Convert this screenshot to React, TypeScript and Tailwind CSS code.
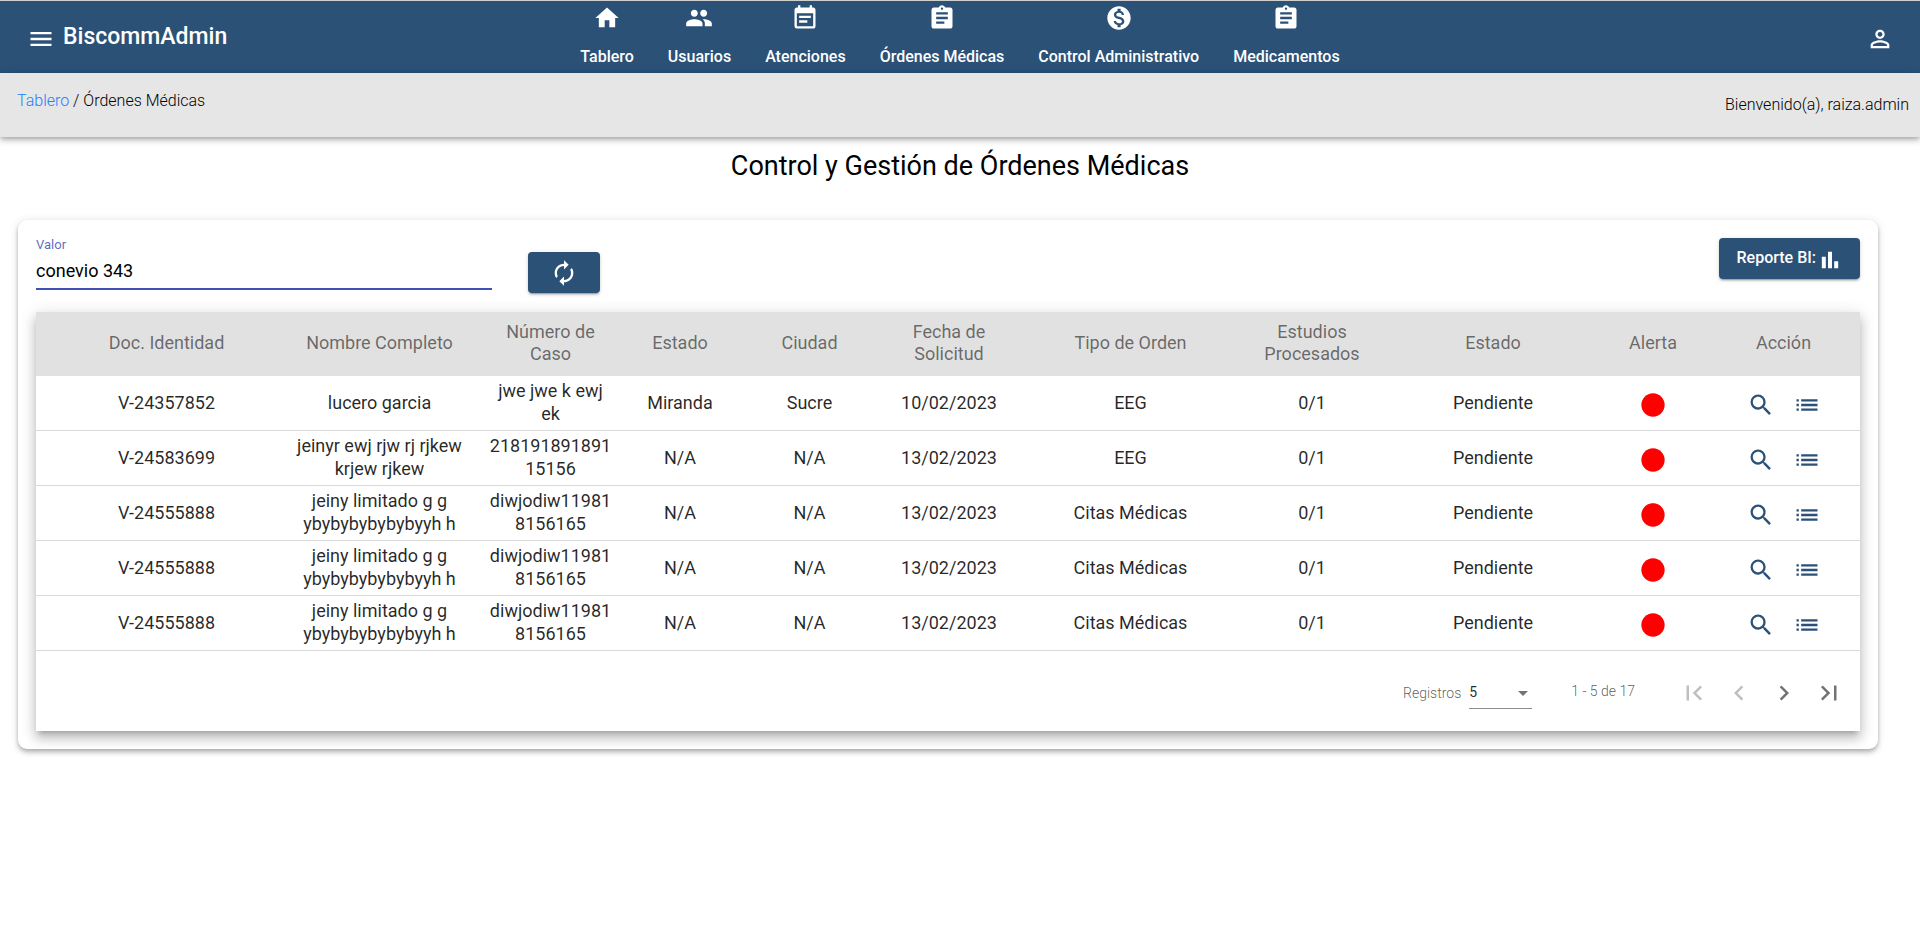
import React from "react";
import {
  MdAssignment,
  MdAutorenew,
  MdChevronLeft,
  MdChevronRight,
  MdEventNote,
  MdFirstPage,
  MdHome,
  MdLastPage,
  MdLens,
  MdList,
  MdMenu,
  MdMonetizationOn,
  MdPeople,
  MdPermIdentity,
  MdSearch,
} from "react-icons/md";

const navItems = [
  { label: "Tablero", icon: MdHome },
  { label: "Usuarios", icon: MdPeople },
  { label: "Atenciones", icon: MdEventNote },
  { label: "Órdenes Médicas", icon: MdAssignment },
  { label: "Control Administrativo", icon: MdMonetizationOn },
  { label: "Medicamentos", icon: MdAssignment },
];

const columns = [
  { label: "Doc. Identidad", width: "w-[237px]", cell: "pl-6" },
  { label: "Nombre Completo", width: "w-[213px]", cell: "px-4" },
  { label: "Número de Caso", width: "w-[129px]", cell: "px-[3px]" },
  { label: "Estado", width: "w-[130px]", cell: "px-0" },
  { label: "Ciudad", width: "w-[129px]", cell: "px-0" },
  { label: "Fecha de Solicitud", width: "w-[150px]", cell: "px-4" },
  { label: "Tipo de Orden", width: "w-[213px]", cell: "px-0" },
  { label: "Estudios Procesados", width: "w-[150px]", cell: "px-4" },
  { label: "Estado", width: "w-[212px]", cell: "px-0" },
  { label: "Alerta", width: "w-[108px]", cell: "px-0" },
  { label: "Acción", width: "w-[153px]", cell: "px-0" },
];

const rows = [
  ["V-24357852", "lucero garcia", "jwe jwe k ewj ek", "Miranda", "Sucre", "10/02/2023", "EEG", "0/1", "Pendiente"],
  ["V-24583699", "jeinyr ewj rjw rj rjkew krjew rjkew", "21819189189115156", "N/A", "N/A", "13/02/2023", "EEG", "0/1", "Pendiente"],
  ["V-24555888", "jeiny limitado g g ybybybybybybyyh h", "diwjodiw119818156165", "N/A", "N/A", "13/02/2023", "Citas Médicas", "0/1", "Pendiente"],
  ["V-24555888", "jeiny limitado g g ybybybybybybyyh h", "diwjodiw119818156165", "N/A", "N/A", "13/02/2023", "Citas Médicas", "0/1", "Pendiente"],
  ["V-24555888", "jeiny limitado g g ybybybybybybyyh h", "diwjodiw119818156165", "N/A", "N/A", "13/02/2023", "Citas Médicas", "0/1", "Pendiente"],
];

const raised =
  "rounded bg-[#2b5177] text-white shadow-[0_3px_1px_-2px_rgba(0,0,0,0.2),0_2px_2px_0_rgba(0,0,0,0.14),0_1px_5px_0_rgba(0,0,0,0.12)]";

function BarChartIcon() {
  return (
    <svg viewBox="0 0 24 24" className="mt-0.5 size-7 fill-current" aria-hidden="true">
      <path d="M5 9.2h3.4V19H5zM10.3 5h3.4v14h-3.4zm5.3 8H19v6h-3.4z" />
    </svg>
  );
}

function Header() {
  return (
    <header className="grid h-[73px] grid-cols-[1fr_auto_1fr] border-t border-[#cfcfcf] bg-[#2b5177] text-white">
      <div className="flex items-center gap-2 pt-[3px] pl-[27px]">
        <button type="button" aria-label="Menú">
          <MdMenu className="size-7" />
        </button>
        <span className="pb-1 text-[23px] leading-7 font-medium">BiscommAdmin</span>
      </div>
      <nav className="flex gap-[34px]">
        {navItems.map(({ label, icon: Icon }) => (
          <a key={label} href="#" className="flex flex-col items-center gap-[13px] pt-[3px] text-base leading-6 font-medium">
            <Icon className="size-7" />
            {label}
          </a>
        ))}
      </nav>
      <div className="flex items-center justify-end pt-[3px] pr-[26px]">
        <button type="button" aria-label="Cuenta">
          <MdPermIdentity className="size-7" />
        </button>
      </div>
    </header>
  );
}

function Paginator() {
  return (
    <div className="flex h-20 items-center justify-end pr-[9px] text-sm font-light text-black/65">
      <label htmlFor="page-size" className="pt-[3px]">Registros</label>
      <div className="relative ml-2 pt-[3px]">
        <select
          id="page-size"
          defaultValue="5"
          className="h-8 w-[63px] appearance-none border-b border-black/45 bg-transparent text-sm font-normal text-black/85 outline-none"
        >
          <option>5</option>
          <option>10</option>
          <option>20</option>
        </select>
        <svg viewBox="0 0 10 5" className="pointer-events-none absolute top-[17px] right-1 h-[5px] w-[10px] fill-black/55" aria-hidden="true">
          <path d="M0 0h10L5 5z" />
        </svg>
      </div>
      <span className="mr-9 ml-[39px]">1 - 5 de 17</span>
      <div className="flex pt-[3px] text-black/55">
        <button type="button" disabled aria-label="Primera página" className="flex size-[45px] items-center justify-center text-black/25">
          <MdFirstPage className="size-[30px]" />
        </button>
        <button type="button" disabled aria-label="Página anterior" className="flex size-[45px] items-center justify-center text-black/25">
          <MdChevronLeft className="size-[30px]" />
        </button>
        <button type="button" aria-label="Página siguiente" className="flex size-[45px] items-center justify-center">
          <MdChevronRight className="size-[30px]" />
        </button>
        <button type="button" aria-label="Última página" className="flex size-[45px] items-center justify-center">
          <MdLastPage className="size-[30px]" />
        </button>
      </div>
    </div>
  );
}

function OrdersTable() {
  return (
    <div className="mt-[18px] bg-white shadow-[0_5px_5px_-3px_rgba(0,0,0,0.2),0_8px_10px_1px_rgba(0,0,0,0.14),0_3px_14px_2px_rgba(0,0,0,0.12)]">
      <table className="w-full table-fixed border-separate border-spacing-0 text-center text-lg">
        <thead>
          <tr className="h-16 bg-[#e1e1e1] leading-[22px] text-black/55">
            {columns.map((c, i) => (
              <th key={i} scope="col" className={`${c.width} ${c.cell} pt-0 pb-0.5 font-normal`}>
                {c.label}
              </th>
            ))}
          </tr>
        </thead>
        <tbody>
          {rows.map((row, r) => (
            <tr key={r} className="h-[55px] leading-[23px] text-black/85">
              {row.map((value, i) => (
                <td key={i} className={`${columns[i].cell} border-b border-black/15 pt-0 pb-0.5 wrap-anywhere`}>
                  {value}
                </td>
              ))}
              <td className="border-b border-black/15 p-0">
                <MdLens className="mx-auto mt-[3px] size-7 text-[#ff0000]" aria-label="Alerta roja" />
              </td>
              <td className="border-b border-black/15 p-0">
                <div className="mt-[3px] flex justify-center gap-[18px] text-[#2b5177]">
                  <button type="button" aria-label="Ver orden">
                    <MdSearch className="size-7" />
                  </button>
                  <button type="button" aria-label="Ver estudios">
                    <MdList className="size-7" />
                  </button>
                </div>
              </td>
            </tr>
          ))}
        </tbody>
      </table>
      <Paginator />
    </div>
  );
}

export default function App() {
  return (
    <div className="min-h-screen bg-white font-['Roboto',sans-serif] text-black">
      <Header />
      <div className="flex h-16 justify-between bg-[#e6e6e6] pr-[11px] pl-[17px] text-base font-light shadow-[0_2px_4px_-1px_rgba(0,0,0,0.2),0_4px_5px_0_rgba(0,0,0,0.14),0_1px_10px_0_rgba(0,0,0,0.12)]">
        <p className="pt-4">
          <a href="#" className="text-[#1e80ff]">Tablero</a> / Órdenes Médicas
        </p>
        <p className="pt-5">Bienvenido(a), raiza.admin</p>
      </div>
      <main className="pt-[9px]">
        <h1 className="text-center text-[27px] leading-10 font-normal">Control y Gestión de Órdenes Médicas</h1>
        <section className="mt-[34px] mr-[42px] ml-[18px] rounded-[9px] bg-white p-[18px] shadow-[0_2px_4px_-1px_rgba(0,0,0,0.2),0_4px_5px_0_rgba(0,0,0,0.14),0_1px_10px_0_rgba(0,0,0,0.12)]">
          <div className="flex h-14 items-start">
            <div className="flex w-1/4 flex-col">
              <label htmlFor="valor" className="text-[13px] leading-[14px] text-[#3f51b5]/85">Valor</label>
              <input
                id="valor"
                type="text"
                defaultValue="conevio 343"
                className="h-[38px] w-full border-b-2 border-[#3f51b5] bg-transparent text-lg outline-none"
              />
            </div>
            <button type="button" aria-label="Actualizar" className={`${raised} mt-[14px] ml-9 flex h-[41px] w-[72px] items-center justify-center`}>
              <MdAutorenew className="size-7" />
            </button>
            <button type="button" className={`${raised} ml-auto flex h-[41px] items-center pr-4 pl-[18px] text-base font-medium`}>
              <span className="pb-0.5">Reporte BI:</span>
              <BarChartIcon />
            </button>
          </div>
          <OrdersTable />
        </section>
      </main>
    </div>
  );
}
